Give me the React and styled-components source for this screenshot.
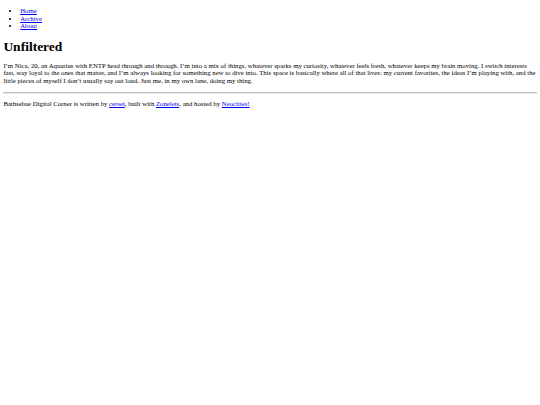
import styled, { createGlobalStyle } from "styled-components";

// the reference is a 1280px-wide page shrunk to 540px, so every default is scaled by 0.421875
const GlobalStyle = createGlobalStyle`
  body {
    margin: 0 3.375px 3.375px;
    background: #fff;
    color: #000;
    font-family: "Liberation Serif", "Times New Roman", serif;
    font-size: 6.75px;
    line-height: 7.76px;
  }
`;

const Nav = styled.ul`
  margin: 6.75px 0;
  padding-left: 16.875px;
  list-style: disc;
`;

const Link = styled.a`
  color: #0000ee;
  text-decoration: underline;
`;

const Title = styled.h1`
  font-size: 13.5px;
  line-height: 14.5px;
  font-weight: bold;
  margin: 10px 0 7px;
`;

const Text = styled.p`
  margin: 6.75px 0;
`;

const Rule = styled.hr`
  margin: 3px 0;
  border: 0;
  border-top: 1px solid #c4c4c4;
  border-bottom: 1px solid #e6e6e6;
`;

const App = () => {
  return (
    <>
      <GlobalStyle />
      <Nav>
        <li><Link href="#">Home</Link></li>
        <li><Link href="#">Archive</Link></li>
        <li><Link href="#">About</Link></li>
      </Nav>
      <Title>Unfiltered</Title>
      <Text>
        I’m Nica, 20, an Aquarius with ENTP head through and through. I’m into a mix of things,
        whatever sparks my curiosity, whatever feels fresh, whatever keeps my brain moving. I switch
        interests fast, stay loyal to the ones that matter, and I’m always looking for something new
        to dive into. This space is basically where all of that lives: my current favorites, the
        ideas I’m playing with, and the little pieces of myself I don’t usually say out loud. Just
        me, in my own lane, doing my thing.
      </Text>
      <Rule />
      <Text>
        Bathsebae Digital Corner is written by <Link href="#">cersei</Link>, built with{" "}
        <Link href="#">Zonelets</Link>, and hosted by <Link href="#">Neocities!</Link>
      </Text>
    </>
  );
};

export default App;
